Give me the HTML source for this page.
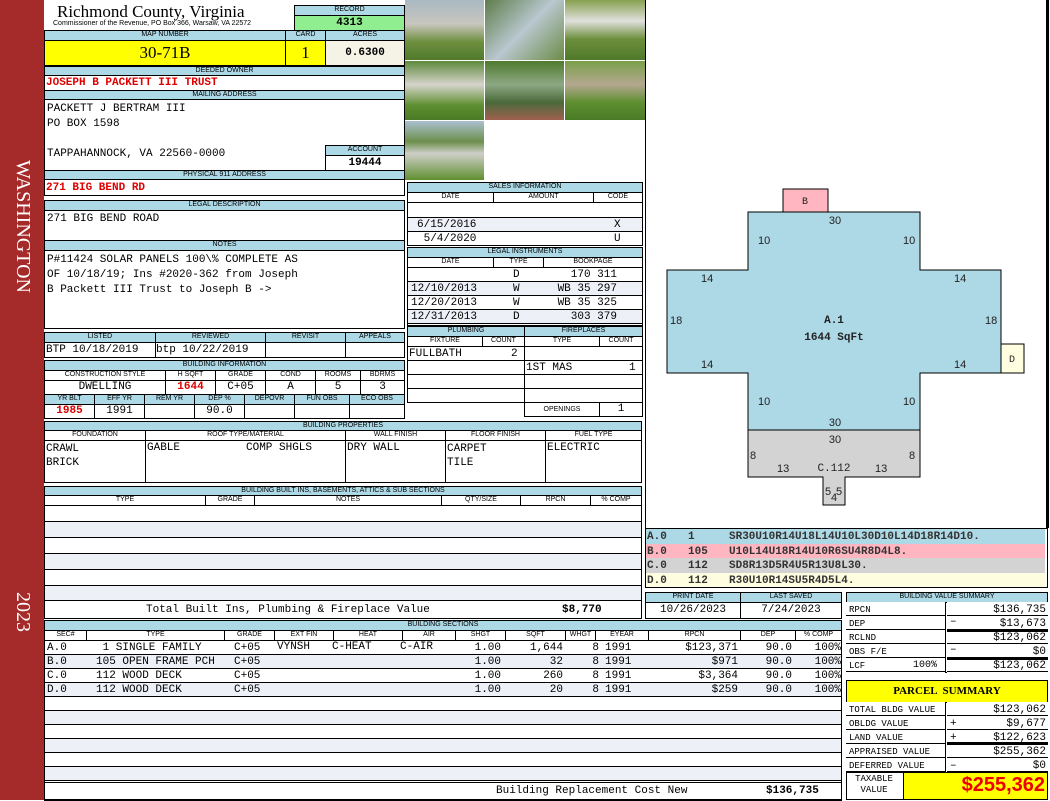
<!DOCTYPE html>
<html><head><meta charset="utf-8"><style>
*{margin:0;padding:0;box-sizing:border-box}
body{width:1050px;height:800px;background:#fff;position:relative;overflow:hidden;font-family:"Liberation Mono",monospace;font-size:11px;color:#000}
.a{position:absolute}
.h{position:absolute;background:#add8e6;border:1px solid #000;font-family:"Liberation Sans",sans-serif;font-size:7px;text-align:center;line-height:8px;overflow:hidden;white-space:nowrap}
.b{position:absolute;border:1px solid #000;overflow:hidden;white-space:nowrap}
.v{position:absolute;font-size:11px;line-height:13px;white-space:nowrap}
.r{color:#d00;font-weight:bold}
.c{text-align:center}
.rt{text-align:right}
</style></head><body>
<div class="a" style="left:0;top:0;width:44px;height:800px;background:#a52a2a"></div>
<div class="a" style="left:8px;top:160px;width:30px;height:170px;color:#fff;font-family:'Liberation Serif',serif;font-size:20px;writing-mode:vertical-rl;line-height:30px">WASHINGTON</div>
<div class="a" style="left:8px;top:592px;width:30px;height:50px;color:#fff;font-family:'Liberation Serif',serif;font-size:20px;writing-mode:vertical-rl;line-height:30px">2023</div>

<div class="a" style="left:57px;top:2px;font-family:'Liberation Serif',serif;font-size:17px;line-height:20px">Richmond County, Virginia</div>
<div class="a" style="left:53px;top:20px;font-family:'Liberation Sans',sans-serif;font-size:7px;line-height:8px">Commissioner of the Revenue, PO Box 366, Warsaw, VA 22572</div>
<div class="h" style="left:294px;top:5px;width:111px;height:11px">RECORD</div>
<div class="b c" style="left:294px;top:15px;width:111px;height:16px;background:#90ee90;font-weight:bold;line-height:14px">4313</div>
<div class="h" style="left:44px;top:30px;width:242px;height:11px">MAP NUMBER</div>
<div class="h" style="left:285px;top:30px;width:41px;height:11px">CARD</div>
<div class="h" style="left:325px;top:30px;width:80px;height:11px">ACRES</div>
<div class="b c" style="left:44px;top:40px;width:242px;height:26px;background:#ff0;font-family:'Liberation Serif',serif;font-size:17px;line-height:24px">30-71B</div>
<div class="b c" style="left:285px;top:40px;width:41px;height:26px;background:#ff0;font-family:'Liberation Serif',serif;font-size:17px;line-height:24px">1</div>
<div class="b c" style="left:325px;top:40px;width:80px;height:26px;background:#f5f3e6;font-weight:bold;line-height:24px">0.6300</div>

<div class="h" style="left:44px;top:66px;width:361px;height:10px">DEEDED OWNER</div>
<div class="b" style="left:44px;top:75px;width:361px;height:16px"></div>
<div class="v r" style="left:46px;top:77px">JOSEPH B PACKETT III TRUST</div>
<div class="h" style="left:44px;top:90px;width:361px;height:10px">MAILING ADDRESS</div>
<div class="b" style="left:44px;top:99px;width:361px;height:72px"></div>
<div class="v" style="left:47px;top:103px">PACKETT J BERTRAM III</div>
<div class="v" style="left:47px;top:118px">PO BOX 1598</div>
<div class="v" style="left:47px;top:148px">TAPPAHANNOCK, VA 22560-0000</div>
<div class="h" style="left:325px;top:145px;width:80px;height:11px">ACCOUNT</div>
<div class="b c" style="left:325px;top:155px;width:80px;height:16px;font-weight:bold;line-height:14px">19444</div>
<div class="h" style="left:44px;top:170px;width:361px;height:10px">PHYSICAL 911 ADDRESS</div>
<div class="b" style="left:44px;top:179px;width:361px;height:17px"></div>
<div class="v r" style="left:46px;top:182px">271 BIG BEND RD</div>

<div class="h" style="left:44px;top:200px;width:361px;height:11px">LEGAL DESCRIPTION</div>
<div class="b" style="left:44px;top:210px;width:361px;height:31px"></div>
<div class="v" style="left:47px;top:213px">271 BIG BEND ROAD</div>
<div class="h" style="left:44px;top:240px;width:361px;height:11px">NOTES</div>
<div class="b" style="left:44px;top:250px;width:361px;height:79px"></div>
<div class="v" style="left:47px;top:253px;line-height:15px">P#11424 SOLAR PANELS 100\% COMPLETE AS<br>OF 10/18/19; Ins #2020-362 from Joseph<br>B Packett III Trust to Joseph B -&gt;</div>

<div class="h" style="left:44px;top:332px;width:112px;height:11px">LISTED</div>
<div class="h" style="left:155px;top:332px;width:111px;height:11px">REVIEWED</div>
<div class="h" style="left:265px;top:332px;width:81px;height:11px">REVISIT</div>
<div class="h" style="left:345px;top:332px;width:60px;height:11px">APPEALS</div>
<div class="b" style="left:44px;top:342px;width:112px;height:16px"></div>
<div class="b" style="left:155px;top:342px;width:111px;height:16px"></div>
<div class="b" style="left:265px;top:342px;width:81px;height:16px"></div>
<div class="b" style="left:345px;top:342px;width:60px;height:16px"></div>
<div class="v" style="left:46px;top:344px">BTP 10/18/2019</div>
<div class="v" style="left:156px;top:344px">btp 10/22/2019</div>

<div class="h" style="left:44px;top:360px;width:361px;height:11px">BUILDING INFORMATION</div>
<div class="h" style="left:44px;top:370px;width:122px;height:11px;background:#fff">CONSTRUCTION STYLE</div>
<div class="h" style="left:165px;top:370px;width:51px;height:11px;background:#fff">H SQFT</div>
<div class="h" style="left:215px;top:370px;width:51px;height:11px;background:#fff">GRADE</div>
<div class="h" style="left:265px;top:370px;width:51px;height:11px;background:#fff">COND</div>
<div class="h" style="left:315px;top:370px;width:46px;height:11px;background:#fff">ROOMS</div>
<div class="h" style="left:360px;top:370px;width:45px;height:11px;background:#fff">BDRMS</div>
<div class="b c" style="left:44px;top:380px;width:122px;height:15px;line-height:13px">DWELLING</div>
<div class="b c r" style="left:165px;top:380px;width:51px;height:15px;line-height:13px">1644</div>
<div class="b c" style="left:215px;top:380px;width:51px;height:15px;line-height:13px">C+05</div>
<div class="b c" style="left:265px;top:380px;width:51px;height:15px;line-height:13px">A</div>
<div class="b c" style="left:315px;top:380px;width:46px;height:15px;line-height:13px">5</div>
<div class="b c" style="left:360px;top:380px;width:45px;height:15px;line-height:13px">3</div>
<div class="h" style="left:44px;top:394px;width:51px;height:11px">YR BLT</div>
<div class="h" style="left:94px;top:394px;width:51px;height:11px">EFF YR</div>
<div class="h" style="left:144px;top:394px;width:51px;height:11px">REM YR</div>
<div class="h" style="left:194px;top:394px;width:51px;height:11px">DEP %</div>
<div class="h" style="left:244px;top:394px;width:51px;height:11px">DEPOVR</div>
<div class="h" style="left:294px;top:394px;width:56px;height:11px">FUN OBS</div>
<div class="h" style="left:349px;top:394px;width:56px;height:11px">ECO OBS</div>
<div class="b c r" style="left:44px;top:404px;width:51px;height:15px;line-height:13px">1985</div>
<div class="b c" style="left:94px;top:404px;width:51px;height:15px;line-height:13px">1991</div>
<div class="b" style="left:144px;top:404px;width:51px;height:15px"></div>
<div class="b c" style="left:194px;top:404px;width:51px;height:15px;line-height:13px">90.0</div>
<div class="b" style="left:244px;top:404px;width:51px;height:15px"></div>
<div class="b" style="left:294px;top:404px;width:56px;height:15px"></div>
<div class="b" style="left:349px;top:404px;width:56px;height:15px"></div>

<div class="h" style="left:44px;top:421px;width:598px;height:10px">BUILDING PROPERTIES</div>
<div class="h" style="left:44px;top:430px;width:102px;height:11px;background:#fff">FOUNDATION</div>
<div class="h" style="left:145px;top:430px;width:201px;height:11px;background:#fff">ROOF TYPE/MATERIAL</div>
<div class="h" style="left:345px;top:430px;width:101px;height:11px;background:#fff">WALL FINISH</div>
<div class="h" style="left:445px;top:430px;width:101px;height:11px;background:#fff">FLOOR FINISH</div>
<div class="h" style="left:545px;top:430px;width:97px;height:11px;background:#fff">FUEL TYPE</div>
<div class="b" style="left:44px;top:440px;width:102px;height:43px"></div>
<div class="b" style="left:145px;top:440px;width:201px;height:43px"></div>
<div class="b" style="left:345px;top:440px;width:101px;height:43px"></div>
<div class="b" style="left:445px;top:440px;width:101px;height:43px"></div>
<div class="b" style="left:545px;top:440px;width:97px;height:43px"></div>
<div class="v" style="left:46px;top:442px;line-height:14px">CRAWL<br>BRICK</div>
<div class="v" style="left:147px;top:442px">GABLE</div>
<div class="v" style="left:246px;top:442px">COMP SHGLS</div>
<div class="v" style="left:347px;top:442px">DRY WALL</div>
<div class="v" style="left:447px;top:442px;line-height:14px">CARPET<br>TILE</div>
<div class="v" style="left:547px;top:442px">ELECTRIC</div>

<div class="h" style="left:44px;top:486px;width:598px;height:10px">BUILDING BUILT INS, BASEMENTS, ATTICS &amp; SUB SECTIONS</div>
<div class="h" style="left:44px;top:495px;width:162px;height:11px;background:#fff">TYPE</div>
<div class="h" style="left:205px;top:495px;width:50px;height:11px;background:#fff">GRADE</div>
<div class="h" style="left:254px;top:495px;width:188px;height:11px;background:#fff">NOTES</div>
<div class="h" style="left:441px;top:495px;width:80px;height:11px;background:#fff">QTY/SIZE</div>
<div class="h" style="left:520px;top:495px;width:71px;height:11px;background:#fff">RPCN</div>
<div class="h" style="left:590px;top:495px;width:52px;height:11px;background:#fff">% COMP</div>
<div class="b" style="left:44px;top:505px;width:598px;height:96px;background:repeating-linear-gradient(#fff 0,#fff 15px,#000 15px,#000 16px,#eef0f8 16px,#eef0f8 31px,#000 31px,#000 32px)"></div>
<div class="b" style="left:44px;top:600px;width:598px;height:19px"></div>
<div class="v" style="left:146px;top:604px">Total Built Ins, Plumbing &amp; Fireplace Value</div>
<div class="v" style="left:562px;top:604px;font-weight:bold">$8,770</div>

<div class="h" style="left:44px;top:620px;width:798px;height:11px">BUILDING SECTIONS</div>
<div class="h" style="left:44px;top:630px;width:43px;height:11px;background:#fff">SEC#</div>
<div class="h" style="left:86px;top:630px;width:139px;height:11px;background:#fff">TYPE</div>
<div class="h" style="left:224px;top:630px;width:51px;height:11px;background:#fff">GRADE</div>
<div class="h" style="left:274px;top:630px;width:60px;height:11px;background:#fff">EXT FIN</div>
<div class="h" style="left:333px;top:630px;width:70px;height:11px;background:#fff">HEAT</div>
<div class="h" style="left:402px;top:630px;width:54px;height:11px;background:#fff">AIR</div>
<div class="h" style="left:455px;top:630px;width:51px;height:11px;background:#fff">SHGT</div>
<div class="h" style="left:505px;top:630px;width:61px;height:11px;background:#fff">SQFT</div>
<div class="h" style="left:565px;top:630px;width:31px;height:11px;background:#fff">WHGT</div>
<div class="h" style="left:595px;top:630px;width:54px;height:11px;background:#fff">EYEAR</div>
<div class="h" style="left:648px;top:630px;width:93px;height:11px;background:#fff">RPCN</div>
<div class="h" style="left:740px;top:630px;width:56px;height:11px;background:#fff">DEP</div>
<div class="h" style="left:795px;top:630px;width:47px;height:11px;background:#fff">% COMP</div>
<div class="b" style="left:44px;top:640px;width:798px;height:161px;background:repeating-linear-gradient(#fff 0,#fff 13px,#000 13px,#000 14px,#eef0f8 14px,#eef0f8 27px,#000 27px,#000 28px)"></div>
<div class="v" style="left:47px;top:641px;line-height:14px">A.0<br>B.0<br>C.0<br>D.0</div>
<div class="v" style="left:96px;top:641px;line-height:14px">&nbsp;1 SINGLE FAMILY<br>105 OPEN FRAME PCH<br>112 WOOD DECK<br>112 WOOD DECK</div>
<div class="v" style="left:234px;top:641px;line-height:14px">C+05<br>C+05<br>C+05<br>C+05</div>
<div class="v" style="left:277px;top:641px">VYNSH</div>
<div class="v" style="left:332px;top:641px">C-HEAT</div>
<div class="v" style="left:400px;top:641px">C-AIR</div>
<div class="v rt" style="left:455px;top:641px;width:46px;line-height:14px">1.00<br>1.00<br>1.00<br>1.00</div>
<div class="v rt" style="left:505px;top:641px;width:58px;line-height:14px">1,644<br>32<br>260<br>20</div>
<div class="v rt" style="left:565px;top:641px;width:34px;line-height:14px">8<br>8<br>8<br>8</div>
<div class="v" style="left:605px;top:641px;line-height:14px">1991<br>1991<br>1991<br>1991</div>
<div class="v rt" style="left:648px;top:641px;width:90px;line-height:14px">$123,371<br>$971<br>$3,364<br>$259</div>
<div class="v rt" style="left:740px;top:641px;width:52px;line-height:14px">90.0<br>90.0<br>90.0<br>90.0</div>
<div class="v rt" style="left:795px;top:641px;width:46px;line-height:14px">100%<br>100%<br>100%<br>100%</div>
<div class="a" style="left:44px;top:782px;width:798px;height:18px;background:#fff;border:1px solid #000"></div>
<div class="v" style="left:496px;top:785px">Building Replacement Cost New</div>
<div class="v" style="left:766px;top:785px;font-weight:bold">$136,735</div>

<div class="a" style="left:405px;top:0;width:240px;height:180px;background:#fff"></div>
<div class="a" style="left:405px;top:0;width:79px;height:60px;background:linear-gradient(#a9b8c2 0,#c8c6be 40%,#6d8f3e 70%,#4f7a2a)"></div>
<div class="a" style="left:485px;top:0;width:79px;height:60px;background:linear-gradient(135deg,#5e7d4a,#b9c7cf 50%,#6c8c47)"></div>
<div class="a" style="left:565px;top:0;width:80px;height:60px;background:linear-gradient(#87a050 0,#e0e0dc 35%,#6d8f3c 65%,#4e7a2a)"></div>
<div class="a" style="left:405px;top:61px;width:79px;height:59px;background:linear-gradient(#5d8a3b 0,#d6d4cc 40%,#5f8f30 75%,#4a7a25)"></div>
<div class="a" style="left:485px;top:61px;width:79px;height:59px;background:linear-gradient(#4f7a2e 0,#8da884 40%,#4a6a3a 70%,#a06050)"></div>
<div class="a" style="left:565px;top:61px;width:80px;height:59px;background:linear-gradient(#7aa04a 0,#b4a890 40%,#5f8f30 70%,#4a7a25)"></div>
<div class="a" style="left:405px;top:121px;width:79px;height:59px;background:linear-gradient(#aac0d0 0,#6c8f4c 35%,#cfcfc8 55%,#5f8f30)"></div>

<div class="h" style="left:407px;top:182px;width:236px;height:11px">SALES INFORMATION</div>
<div class="h" style="left:407px;top:192px;width:87px;height:11px;background:#fff">DATE</div>
<div class="h" style="left:493px;top:192px;width:101px;height:11px;background:#fff">AMOUNT</div>
<div class="h" style="left:593px;top:192px;width:50px;height:11px;background:#fff">CODE</div>
<div class="b" style="left:407px;top:202px;width:236px;height:44px;background:linear-gradient(#fff 0,#fff 14px,#000 14px,#000 15px,#eef0f8 15px,#eef0f8 28px,#000 28px,#000 29px,#fff 29px)"></div>
<div class="v" style="left:417px;top:218px;line-height:14px">6/15/2016<br>&nbsp;5/4/2020</div>
<div class="v" style="left:614px;top:218px;line-height:14px">X<br>U</div>

<div class="h" style="left:407px;top:247px;width:236px;height:11px">LEGAL INSTRUMENTS</div>
<div class="h" style="left:407px;top:257px;width:87px;height:11px;background:#fff">DATE</div>
<div class="h" style="left:493px;top:257px;width:51px;height:11px;background:#fff">TYPE</div>
<div class="h" style="left:543px;top:257px;width:100px;height:11px;background:#fff">BOOKPAGE</div>
<div class="b" style="left:407px;top:267px;width:236px;height:59px;background:repeating-linear-gradient(#fff 0,#fff 13px,#000 13px,#000 14px,#eef0f8 14px,#eef0f8 27px,#000 27px,#000 28px)"></div>
<div class="v" style="left:411px;top:268px;line-height:14px"><br>12/10/2013<br>12/20/2013<br>12/31/2013</div>
<div class="v" style="left:513px;top:268px;line-height:14px">D<br>W<br>W<br>D</div>
<div class="v rt" style="left:543px;top:268px;width:74px;line-height:14px">170 311<br>WB 35 297<br>WB 35 325<br>303 379</div>

<div class="h" style="left:407px;top:326px;width:118px;height:11px">PLUMBING</div>
<div class="h" style="left:524px;top:326px;width:119px;height:11px">FIREPLACES</div>
<div class="h" style="left:407px;top:336px;width:76px;height:11px;background:#fff">FIXTURE</div>
<div class="h" style="left:482px;top:336px;width:43px;height:11px;background:#fff">COUNT</div>
<div class="h" style="left:524px;top:336px;width:76px;height:11px;background:#fff">TYPE</div>
<div class="h" style="left:599px;top:336px;width:44px;height:11px;background:#fff">COUNT</div>
<div class="b" style="left:407px;top:346px;width:118px;height:57px;background:repeating-linear-gradient(#fff 0,#fff 13px,#000 13px,#000 14px)"></div>
<div class="b" style="left:524px;top:346px;width:119px;height:57px;background:repeating-linear-gradient(#fff 0,#fff 13px,#000 13px,#000 14px)"></div>
<div class="v" style="left:409px;top:348px">FULLBATH</div>
<div class="v" style="left:511px;top:348px">2</div>
<div class="v" style="left:526px;top:362px">1ST MAS</div>
<div class="v" style="left:629px;top:362px">1</div>
<div class="h" style="left:524px;top:402px;width:76px;height:15px;background:#fff;line-height:13px">OPENINGS</div>
<div class="b c" style="left:599px;top:402px;width:44px;height:15px;line-height:13px">1</div>

<div class="a" style="left:645px;top:0;width:404px;height:528px;border-left:1px solid #000;border-right:3px solid #000"></div>
<svg class="a" style="left:645px;top:0" width="403" height="528" font-family="Liberation Sans, sans-serif" font-size="11">
<rect x="138" y="189" width="45" height="23" fill="#ffb6c1" stroke="#000"/>
<rect x="356" y="344" width="23" height="29" fill="#fffde0" stroke="#000"/>
<polygon points="103,430 275,430 275,477 200,477 200,505 178,505 178,477 103,477" fill="#d3d3d3" stroke="#000"/>
<polygon points="103,212 275,212 275,270 356,270 356,373 275,373 275,430 103,430 103,373 22,373 22,270 103,270" fill="#add8e6" stroke="#000"/>
<g fill="#222">
<text x="160" y="204" font-family="Liberation Mono" font-size="10" text-anchor="middle">B</text>
<text x="367" y="362" font-family="Liberation Mono" font-size="10" text-anchor="middle">D</text>
<text x="190" y="224" text-anchor="middle">30</text>
<text x="113" y="244">10</text><text x="258" y="244">10</text>
<text x="56" y="282">14</text><text x="309" y="282">14</text>
<text x="25" y="324">18</text><text x="340" y="324">18</text>
<text x="189" y="323" font-family="Liberation Mono" font-weight="bold" text-anchor="middle">A.1</text>
<text x="189" y="340" font-family="Liberation Mono" font-weight="bold" text-anchor="middle">1644 SqFt</text>
<text x="56" y="368">14</text><text x="309" y="368">14</text>
<text x="113" y="405">10</text><text x="258" y="405">10</text>
<text x="190" y="426" text-anchor="middle">30</text>
<text x="190" y="443" text-anchor="middle">30</text>
<text x="105" y="459">8</text><text x="264" y="459">8</text>
<text x="132" y="472">13</text><text x="230" y="472">13</text>
<text x="189" y="471" font-family="Liberation Mono" text-anchor="middle">C.112</text>
<text x="180" y="495">5</text><text x="191" y="495">5</text><text x="186" y="501">4</text>
</g>
</svg>

<div class="a" style="left:645px;top:528px;width:403px;height:60px;border:1px solid #000"></div>
<div class="a" style="left:646px;top:529px;width:399px;height:15px;background:#add8e6"></div>
<div class="a" style="left:646px;top:544px;width:399px;height:14px;background:#ffb6c1"></div>
<div class="a" style="left:646px;top:558px;width:399px;height:15px;background:#d3d3d3"></div>
<div class="a" style="left:646px;top:573px;width:399px;height:14px;background:#fffde0"></div>
<div class="v" style="left:647px;top:530px;line-height:14.5px;color:#333;font-weight:bold">A.0<br>B.0<br>C.0<br>D.0</div>
<div class="v" style="left:688px;top:530px;line-height:14.5px;color:#333;font-weight:bold">1<br>105<br>112<br>112</div>
<div class="v" style="left:729px;top:530px;line-height:14.5px;color:#333;font-weight:bold">SR30U10R14U18L14U10L30D10L14D18R14D10.<br>U10L14U18R14U10R6SU4R8D4L8.<br>SD8R13D5R4U5R13U8L30.<br>R30U10R14SU5R4D5L4.</div>

<div class="h" style="left:645px;top:592px;width:96px;height:11px">PRINT DATE</div>
<div class="h" style="left:740px;top:592px;width:102px;height:11px">LAST SAVED</div>
<div class="b c" style="left:645px;top:602px;width:96px;height:17px;line-height:15px">10/26/2023</div>
<div class="b c" style="left:740px;top:602px;width:102px;height:17px;line-height:15px">7/24/2023</div>

<div class="h" style="left:846px;top:592px;width:202px;height:11px">BUILDING VALUE SUMMARY</div>
<div class="a" style="left:846px;top:602px;width:202px;height:71px;border:1px solid #000"></div>
<div class="a" style="left:846px;top:602px;width:100px;height:71px;border-right:1px solid #000;background:repeating-linear-gradient(#fff 0,#fff 13px,#000 13px,#000 14px)"></div>
<div class="a" style="left:947px;top:602px;width:101px;height:71px;background:repeating-linear-gradient(#fff 0,#fff 13px,#000 13px,#000 14px)"></div>
<div class="a" style="left:947px;top:629px;width:101px;height:3px;background:#000"></div>
<div class="a" style="left:947px;top:657px;width:101px;height:3px;background:#000"></div>
<div class="v" style="left:849px;top:603px;line-height:14px;font-size:9px">RPCN<br>DEP<br>RCLND<br>OBS F/E<br>LCF</div>
<div class="v" style="left:913px;top:659px;font-size:10px">100%</div>
<div class="v" style="left:950px;top:616px">–</div><div class="v" style="left:950px;top:644px">–</div>
<div class="v rt" style="left:947px;top:603px;width:99px;line-height:14px">$136,735<br>$13,673<br>$123,062<br>$0<br>$123,062</div>

<div class="b c" style="left:846px;top:680px;width:202px;height:23px;background:#ff0;font-weight:bold;font-size:11px;line-height:21px;font-family:'Liberation Serif',serif">PARCEL &nbsp;SUMMARY</div>
<div class="a" style="left:846px;top:702px;width:202px;height:71px;border:1px solid #000"></div>
<div class="a" style="left:846px;top:702px;width:100px;height:71px;border-right:1px solid #000;background:repeating-linear-gradient(#fff 0,#fff 13px,#000 13px,#000 14px)"></div>
<div class="a" style="left:947px;top:702px;width:101px;height:71px;background:repeating-linear-gradient(#fff 0,#fff 13px,#000 13px,#000 14px)"></div>
<div class="a" style="left:947px;top:742px;width:101px;height:3px;background:#000"></div>
<div class="v" style="left:849px;top:703px;line-height:14px;font-size:9px">TOTAL BLDG VALUE<br>OBLDG VALUE<br>LAND VALUE<br>APPRAISED VALUE<br>DEFERRED VALUE</div>
<div class="v" style="left:950px;top:717px;line-height:14px">+<br>+<br><br>–</div>
<div class="v rt" style="left:947px;top:703px;width:99px;line-height:14px">$123,062<br>$9,677<br>$122,623<br>$255,362<br>$0</div>
<div class="b" style="left:846px;top:772px;width:58px;height:28px"></div>
<div class="v c" style="left:846px;top:774px;width:56px;font-size:9px;line-height:11px">TAXABLE<br>VALUE</div>
<div class="b rt" style="left:903px;top:772px;width:145px;height:28px;background:#ff0;color:#e00;font-family:'Liberation Sans',sans-serif;font-weight:bold;font-size:20px;line-height:25px;padding-right:2px">$255,362</div>
</body></html>
